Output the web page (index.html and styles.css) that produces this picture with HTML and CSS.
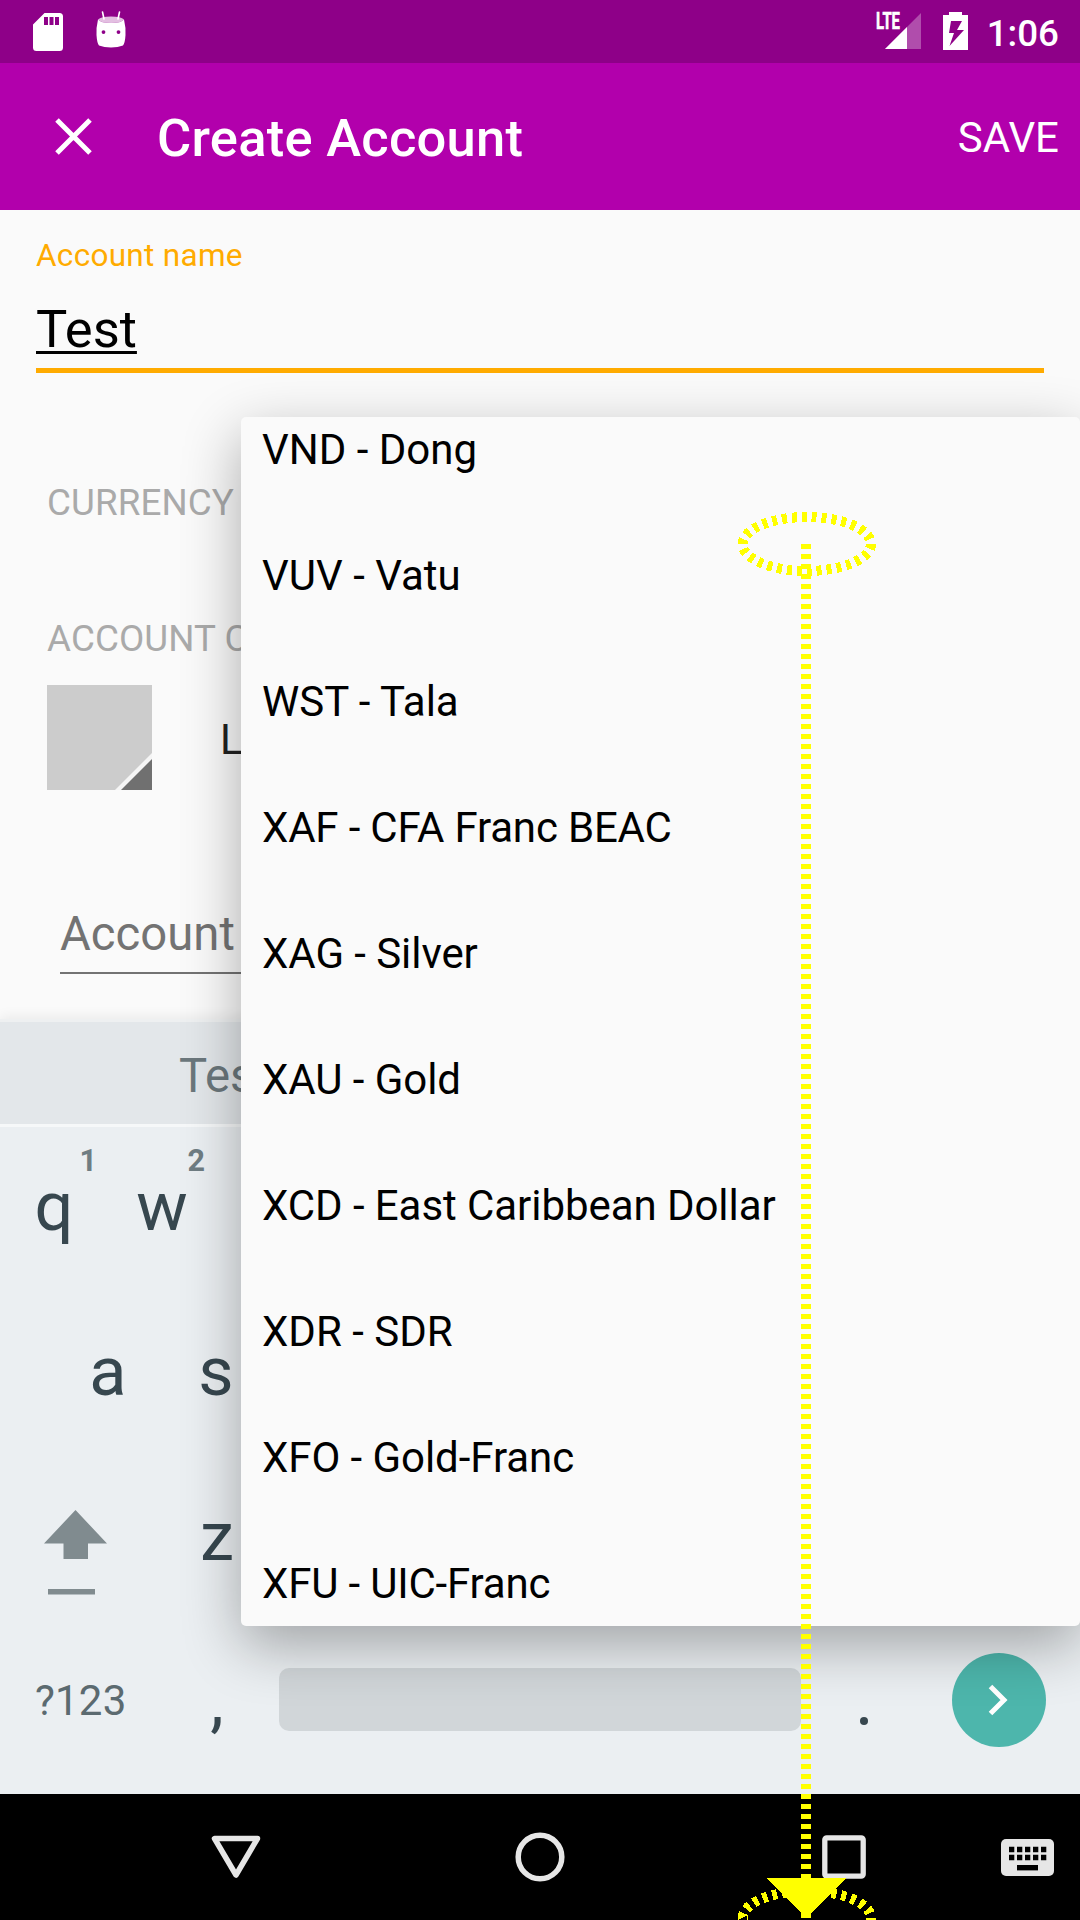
FILE: index.html
```html
<!DOCTYPE html>
<html lang="en">
<head>
<meta charset="utf-8">
<title>Create Account</title>
<link rel="stylesheet" href="styles.css">
</head>
<body>
<div class="screen">
  <header class="status-bar">
    <svg class="icon-sd" width="30" height="38" viewBox="0 0 30 38"><path fill="#fff" fill-rule="evenodd" d="M11.500 0H26.500Q30 0 30 3.500V34.500Q30 38 26.500 38H3.500Q0 38 0 34.500V11.500ZM11 4V12H15V4ZM16.500 4V12H20.500V4ZM22 4V12H26V4Z"/></svg>
    <svg class="icon-droid" width="30" height="37" viewBox="0 0 30 37"><g fill="#fff"><path d="M6.500 1L8 8M23.500 1L22 8" stroke="#fff" stroke-width="1.600" stroke-linecap="round"/><path fill-rule="evenodd" d="M2 8.500Q5 12 15 12T28 8.500Q30 17 29.500 24Q29 32 27 34.500Q22 36.500 15 36.500T3 34.500Q1 32 .5 24Q0 17 2 8.500ZM7.500 19.200A1.900 1.900 0 1 0 7.500 23A1.900 1.900 0 1 0 7.500 19.200ZM22.500 19.200A1.900 1.900 0 1 0 22.500 23A1.900 1.900 0 1 0 22.500 19.200Z"/><path opacity=".75" d="M2 8.500Q5 5.500 15 5.500T28 8.500Q25 12 15 12T2 8.500Z"/></g></svg>
    <span class="spacer"></span>
    <svg class="icon-signal" width="50" height="50" viewBox="-4 -12 50 50"><path fill="#fff" opacity=".3" d="M9 37H45V1Z"/><path fill="#fff" d="M9 37H31V15Z"/><text class="lte" x="0" y="17" textLength="24" lengthAdjust="spacingAndGlyphs">LTE</text></svg>
    <svg class="icon-battery" width="25" height="38" viewBox="0 0 25 38"><path fill="#fff" fill-rule="evenodd" d="M6 0H19V3H25V38H0V3H6ZM8 9L6 21H11L6.500 34L21 18H14L19 9Z"/></svg>
    <span class="clock">1:06</span>
  </header>
  <header class="toolbar">
    <svg class="icon-close" width="37" height="37" viewBox="0 0 37 37"><path d="M2 2L35 35M35 2L2 35" stroke="#fff" stroke-width="5"/></svg>
    <h1 class="title">Create Account</h1>
    <span class="save">SAVE</span>
  </header>
  <main class="form">
    <div class="name-field">
      <div class="name-label">Account name</div>
      <div class="name-input"><span class="composing">Test</span></div>
    </div>
    <div class="caption currency">CURRENCY</div>
    <div class="caption colour">ACCOUNT C</div>
    <div class="swatch-row">
      <svg width="105" height="105" viewBox="0 0 105 105"><path fill="#ccc" d="M0 0H105V105H0Z"/><path fill="#f5f5f5" d="M105 68V105H68Z"/><path fill="#707070" d="M105 74V105H74Z"/></svg>
      <span class="swatch-text">L</span>
    </div>
    <div class="description">Account</div>
  </main>
  <section class="keyboard">
    <div class="suggestions">Tes</div>
    <div class="keys">
      <div class="row"><span class="key">q<sup class="hint">1</sup></span><span class="key">w<sup class="hint">2</sup></span></div>
      <div class="row row-home"><span class="key">a</span><span class="key">s</span></div>
      <div class="row">
        <span class="shift"><svg width="64" height="86" viewBox="0 0 64 86"><path fill="#808b8f" d="M31.500 0L63 33.500H44V49H19.500V33.500H0ZM4 79H51V84.500H4Z"/></svg></span>
        <span class="key">z</span>
      </div>
      <div class="row row-bottom">
        <span class="symbols">?123</span><span class="key comma">,</span>
        <span class="space"></span>
        <span class="period"></span>
        <span class="enter"><svg width="20" height="32" viewBox="0 0 20 32"><path d="M2.500 2.500L16 16L2.500 29.500" fill="none" stroke="#fff" stroke-width="5"/></svg></span>
      </div>
    </div>
  </section>
  <nav class="nav">
    <span></span>
    <svg width="50" height="44" viewBox="0 0 50 44"><path d="M3.500 3.500H46.500L25 40Z" fill="none" stroke="#e6e6e6" stroke-width="5.500" stroke-linejoin="round"/></svg>
    <svg width="50" height="50" viewBox="0 0 50 50"><circle cx="25" cy="25" r="21.800" fill="none" stroke="#e6e6e6" stroke-width="5.500"/></svg>
    <svg width="44" height="44" viewBox="0 0 44 44"><rect x="2.800" y="2.800" width="38.400" height="38.400" rx="2" fill="none" stroke="#e6e6e6" stroke-width="5.300"/></svg>
    <svg class="icon-keyboard" width="53" height="37" viewBox="0 0 53 37"><rect width="53" height="37" rx="5" fill="#e6e6e6"/><path d="M8 10.500H46M8 18.500H46" stroke="#000" stroke-width="5.300" stroke-dasharray="5.300 2.700"/><path d="M16 28.700H37" stroke="#000" stroke-width="5.400"/></svg>
  </nav>

  <div class="popup">
    <ul class="options">
      <li>VND - Dong</li>
      <li>VUV - Vatu</li>
      <li>WST - Tala</li>
      <li class="tight">XAF - CFA Franc BEAC</li>
      <li class="snug">XAG - Silver</li>
      <li class="snug">XAU - Gold</li>
      <li class="snug">XCD - East Caribbean Dollar</li>
      <li>XDR - SDR</li>
      <li class="snug">XFO - Gold-Franc</li>
      <li class="tight">XFU - UIC-Franc</li>
    </ul>
  </div>

  <svg class="gesture" width="1080" height="1920" viewBox="0 0 1080 1920" shape-rendering="crispEdges">
    <g fill="none" stroke="#ff0" stroke-width="10" stroke-dasharray="5 5">
      <path pathLength="300" d="M871 544A64.250 27 0 0 1 742.500 544A64.250 27 0 0 1 871 544"/>
      <path pathLength="300" d="M871 1918A64.250 27 0 0 1 742.500 1918A64.250 27 0 0 1 871 1918"/>
      <path d="M806 544V1918"/>
    </g>
    <path fill="#ff0" d="M766 1878H846L811 1913V1918H801V1913Z"/>
  </svg>
</div>
</body>
</html>
```
FILE: styles.css
```css
* { box-sizing: border-box; }
body { margin: 0; font-family: Roboto, "Noto Sans", sans-serif; }
.screen { position: relative; width: 1080px; height: 1920px; overflow: hidden; display: flex; flex-direction: column; background: #fafafa; }

.status-bar { height: 63px; background: #8e0088; display: flex; align-items: flex-start; padding: 0 21px 0 32.500px; color: #fff; }
.icon-sd { margin-top: 12.500px; }
.icon-droid { margin: 10.500px 0 0 33px; }
.spacer { flex: 1; }
.icon-battery { margin: 12px 19px 0 20.500px; }
.lte { font-size: 23px; font-weight: 700; fill: #fff; stroke: #fff; stroke-width: .6px; }
.clock { font-size: 36.750px; font-weight: 500; line-height: 44px; padding-top: 12px; }

.toolbar { height: 147px; background: #b200ac; color: #fff; display: flex; align-items: center; padding: 0 21px 0 55px; }
.title { flex: 1; margin: 3px 0 0 65px; font-size: 52.500px; font-weight: 500; line-height: 62px; letter-spacing: .25px; }
.save { font-size: 42px; line-height: 50px; padding-top: 2px; }

.form { height: 809px; padding-top: 26px; }
.name-field { margin: 0 36px; border-bottom: 5px solid #ffab00; padding-bottom: 8px; }
.name-label { font-size: 31.500px; line-height: 40px; letter-spacing: .3px; color: #ffab00; }
.name-input { margin-top: 22px; font-size: 52.500px; line-height: 62px; color: #000; }
.composing { text-decoration: underline; text-decoration-thickness: 3px; text-underline-offset: 4px; text-decoration-skip-ink: none; }
.caption { margin-left: 47px; font-size: 36.750px; line-height: 44px; letter-spacing: .1px; color: #aaa; }
.currency { margin-top: 108px; }
.colour { margin-top: 92px; }
.swatch-row { display: flex; align-items: center; height: 105px; margin: 24px 0 0 47px; }
.swatch-text { margin: 4px 0 0 68px; font-size: 42px; line-height: 50px; color: #212121; }
.description { margin: 116px 60px 0 60px; height: 68px; font-size: 47.250px; line-height: 56px; color: #737373; border-bottom: 2px solid #737373; }

.keyboard { height: 775px; background: #ebeff2; border-top: 3px solid #eef0f1; box-shadow: 0 -2px 12px rgba(0, 0, 0, .07); }
.suggestions { height: 105px; background: #e3e7ea; border-bottom: 3px solid #f6f8f9; padding: 26px 0 0 179px; font-size: 47.250px; line-height: 56px; color: #6b777c; }
.keys { display: flex; flex-direction: column; gap: 8px; }
.row { display: flex; align-items: center; height: 157px; color: #37474f; font-size: 68.500px; }
.row-home { padding-left: 54px; }
.row-bottom { height: 155px; }
.key { position: relative; width: 108px; margin-top: 2px; line-height: 157px; text-align: center; }
.hint { position: absolute; top: 15px; right: 11px; font-size: 30.500px; font-weight: 700; line-height: 36px; color: #6f7d83; }
.shift { width: 163px; padding: 34px 0 0 44px; line-height: 0; }
.symbols { width: 162px; margin-top: 2px; padding-left: 35px; font-size: 42px; line-height: 50px; letter-spacing: .2px; color: #5b6a70; }
.comma { margin-top: 1px; padding-left: 2px; }
.space { width: 522px; height: 63px; margin-left: 9px; border-radius: 10px; background: #d1d6d9; }
.period { width: 8px; height: 8px; margin: 42px 0 0 58.500px; border-radius: 50%; background: #37474f; }
.enter { width: 94px; height: 94px; margin-left: 84.500px; padding-right: 2px; border-radius: 50%; background: #4db6ac; display: flex; align-items: center; justify-content: center; }

.nav { height: 126px; background: #000; display: grid; grid-template-columns: 84px 304px 304px 304px 84px; align-items: center; justify-items: center; }
.icon-keyboard { margin-right: 21px; }

.popup { position: absolute; left: 241px; top: 417px; width: 839px; height: 1209px; overflow: hidden; border-radius: 5px; background: #fafafa; box-shadow: 0 19px 58px rgba(0, 0, 0, .32); }
.options { list-style: none; margin: -30px 0 0; padding: 0 0 0 21px; }
.options li { height: 126px; line-height: 126px; font-size: 42px; color: #000; }
.options .tight { letter-spacing: -.18px; }
.options .snug { letter-spacing: -.06px; }
.gesture { position: absolute; left: 0; top: 0; }
```
